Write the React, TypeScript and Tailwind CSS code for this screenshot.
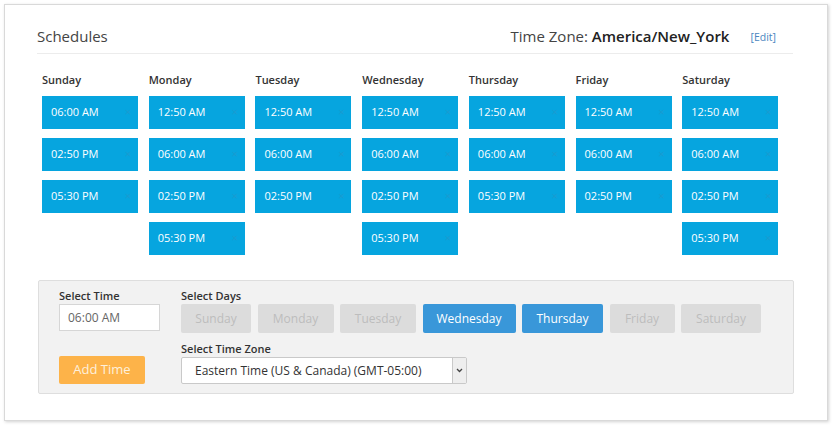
import React from "react";

const days = ["Sunday", "Monday", "Tuesday", "Wednesday", "Thursday", "Friday", "Saturday"];

const schedule: Record<string, string[]> = {
  Sunday: ["06:00 AM", "02:50 PM", "05:30 PM"],
  Monday: ["12:50 AM", "06:00 AM", "02:50 PM", "05:30 PM"],
  Tuesday: ["12:50 AM", "06:00 AM", "02:50 PM"],
  Wednesday: ["12:50 AM", "06:00 AM", "02:50 PM", "05:30 PM"],
  Thursday: ["12:50 AM", "06:00 AM", "05:30 PM"],
  Friday: ["12:50 AM", "06:00 AM", "02:50 PM"],
  Saturday: ["12:50 AM", "06:00 AM", "02:50 PM", "05:30 PM"],
};

const selected = ["Wednesday", "Thursday"];

const dayBtnWidth: Record<string, string> = {
  Sunday: "w-[70px]",
  Monday: "w-[76px]",
  Tuesday: "w-[76px]",
  Wednesday: "w-[93px]",
  Thursday: "w-[81px]",
  Friday: "w-[65px]",
  Saturday: "w-[80px]",
};

export default function App() {
  return (
    <div className="w-[832px] h-[425px] bg-white font-['Open_Sans',sans-serif] text-[#333]">
      <div className="ml-[4px] pt-[4px]">
        <div className="w-[824px] h-[417px] border border-[#d9d9d9] bg-white shadow-[1px_1px_3px_rgba(0,0,0,0.18)] pl-[32px] pt-[20px]">
          {/* header */}
          <div className="w-[756px] flex items-center justify-between border-b border-[#ececec] pb-[6px]">
            <h2 className="text-[15px] leading-[22px] text-[#444]">Schedules</h2>
            <div className="flex items-center pr-[17px]">
              <span className="text-[15px] leading-[22px] text-[#444]">
                Time Zone: <span className="font-semibold text-[#222]">America/New_York</span>
              </span>
              <a className="ml-[21px] text-[10.5px] leading-[16px] text-[#4a86c0] mt-[2px]">[Edit]</a>
            </div>
          </div>

          {/* schedule grid */}
          <div className="ml-[5px] mt-[18px] w-[747px] grid grid-cols-7">
            {days.map((d) => (
              <div key={d} className="flex flex-col">
                <div className="text-[11px] leading-[16px] font-semibold text-[#333] mb-[8px]">{d}</div>
                <div className="flex flex-col gap-[9px]">
                  {schedule[d].map((t, i) => (
                    <div
                      key={i}
                      className="w-[96px] h-[33px] bg-[#06a5df] flex items-center justify-between pl-[9px] pr-[7px]"
                    >
                      <span className="text-[11px] text-white">{t}</span>
                      <span className="text-[11px] text-[#1a9bd0]">×</span>
                    </div>
                  ))}
                </div>
              </div>
            ))}
          </div>

          {/* form panel */}
          <div className="ml-[1px] mt-[25px] w-[756px] h-[114px] bg-[#f2f2f2] border border-[#dedede] rounded-[2px] pl-[20px] pt-[7px] flex gap-[21px]">
            <div className="flex flex-col w-[101px]">
              <label className="text-[11px] leading-[16px] font-semibold text-[#333]">Select Time</label>
              <div className="h-[27px] bg-white border border-[#d6d6d6] flex items-center pl-[8px] text-[12px] text-[#666]">
                06:00 AM
              </div>
              <button className="mt-[25px] w-[86px] h-[28px] bg-[#fdb349] rounded-[2px] text-[13px] text-[#fdf0dc]">
                Add Time
              </button>
            </div>
            <div className="flex flex-col">
              <label className="text-[11px] leading-[16px] font-semibold text-[#333]">Select Days</label>
              <div className="flex gap-[6.5px]">
                {days.map((d) => {
                  const on = selected.includes(d);
                  return (
                    <button
                      key={d}
                      className={`${dayBtnWidth[d]} h-[29px] rounded-[2px] text-[12px] ${
                        on ? "bg-[#3997d9] text-white" : "bg-[#dcdcdc] text-[#bdbdbd]"
                      }`}
                    >
                      {d}
                    </button>
                  );
                })}
              </div>
              <label className="mt-[8px] text-[11px] leading-[16px] font-semibold text-[#333]">Select Time Zone</label>
              <div className="w-[286px] h-[27px] bg-white border border-[#c9c9c9] rounded-[2px] flex items-center justify-between">
                <span className="pl-[13px] text-[12px] text-[#333]">Eastern Time (US &amp; Canada) (GMT-05:00)</span>
                <span className="w-[14px] h-full bg-[#eeeeee] border-l border-[#c9c9c9] flex items-center justify-center">
                  <svg width="7" height="5" viewBox="0 0 7 5">
                    <path d="M1 1 L3.5 3.5 L6 1" fill="none" stroke="#444" strokeWidth="1.3" />
                  </svg>
                </span>
              </div>
            </div>
          </div>
        </div>
      </div>
    </div>
  );
}
